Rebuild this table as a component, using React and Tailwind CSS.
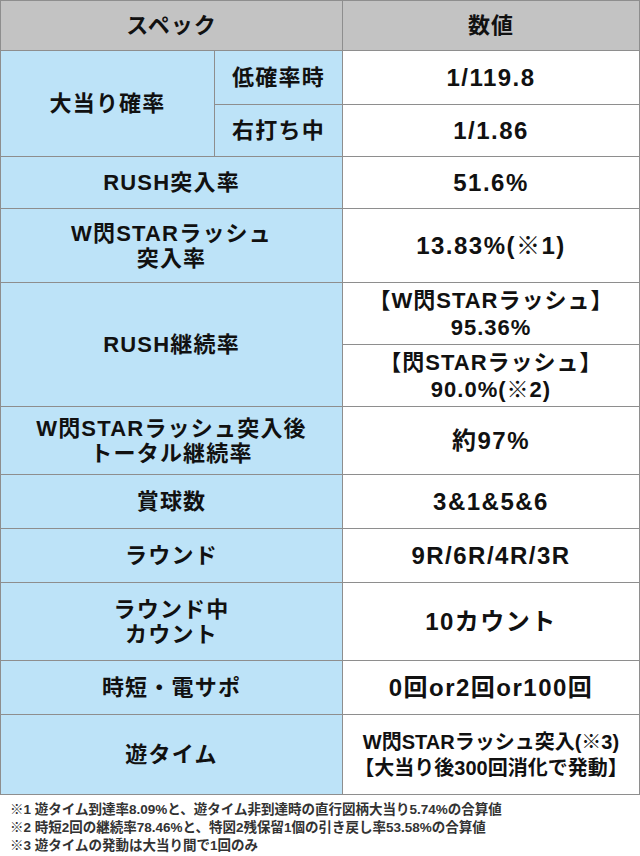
import React from 'react';

const font = "font-['Liberation_Sans','Noto_Sans_CJK_JP',sans-serif]";

const Label = ({ className = '', children }) => (
  <div className={`bg-[#bde3f8] flex flex-col items-center justify-center text-center text-[22px] leading-[25px] tracking-[1.2px] font-bold text-[#111] ${className}`}>
    {children}
  </div>
);

const Value = ({ className = 'text-[24px] leading-[27px] tracking-[1.5px]', children }) => (
  <div className={`bg-white flex flex-col items-center justify-center text-center font-bold text-[#111] ${className}`}>
    {children}
  </div>
);

const notes = [
  '※1 遊タイム到達率8.09%と、遊タイム非到達時の直行図柄大当り5.74%の合算値',
  '※2 時短2回の継続率78.46%と、特図2残保留1個の引き戻し率53.58%の合算値',
  '※3 遊タイムの発動は大当り間で1回のみ',
];

export default function App() {
  return (
    <div className={`w-[640px] h-[856px] bg-white ${font}`}>
      <div className="grid grid-cols-[213px_127px_296px] grid-rows-[49px_53px_51px_51px_73px_61px_61px_67px_53px_53px_77px_53px_79px] gap-px bg-[#8e8e8e] border border-[#8e8e8e]">
        <div className="col-span-2 bg-[#c3c3c3] flex items-center justify-center text-[22px] tracking-[1px] font-bold text-[#111]">スペック</div>
        <div className="bg-[#c3c3c3] flex items-center justify-center text-[22px] tracking-[1px] font-bold text-[#111]">数値</div>

        <Label className="row-span-2">大当り確率</Label>
        <Label>低確率時</Label>
        <Value>1/119.8</Value>
        <Label>右打ち中</Label>
        <Value>1/1.86</Value>

        <Label className="col-span-2">RUSH突入率</Label>
        <Value>51.6%</Value>

        <Label className="col-span-2">
          <span>W閃STARラッシュ</span>
          <span>突入率</span>
        </Label>
        <Value>13.83%(※1)</Value>

        <Label className="col-span-2 row-span-2">RUSH継続率</Label>
        <Value className="text-[22px] leading-[27px] tracking-[1px]">
          <span>【W閃STARラッシュ】</span>
          <span>95.36%</span>
        </Value>
        <Value className="text-[22px] leading-[27px] tracking-[1px]">
          <span>【閃STARラッシュ】</span>
          <span>90.0%(※2)</span>
        </Value>

        <Label className="col-span-2">
          <span>W閃STARラッシュ突入後</span>
          <span>トータル継続率</span>
        </Label>
        <Value>約97%</Value>

        <Label className="col-span-2">賞球数</Label>
        <Value>3&amp;1&amp;5&amp;6</Value>

        <Label className="col-span-2">ラウンド</Label>
        <Value>9R/6R/4R/3R</Value>

        <Label className="col-span-2">
          <span>ラウンド中</span>
          <span>カウント</span>
        </Label>
        <Value>10カウント</Value>

        <Label className="col-span-2">時短・電サポ</Label>
        <Value>0回or2回or100回</Value>

        <Label className="col-span-2">遊タイム</Label>
        <Value className="text-[20px] leading-[26px]">
          <span>W閃STARラッシュ突入(※3)</span>
          <span>【大当り後300回消化で発動】</span>
        </Value>
      </div>

      <div className="pt-[6px] pl-[10px] text-[13.5px] leading-[18px] font-bold text-[#333]">
        {notes.map((n) => (
          <p key={n}>{n}</p>
        ))}
      </div>
    </div>
  );
}
